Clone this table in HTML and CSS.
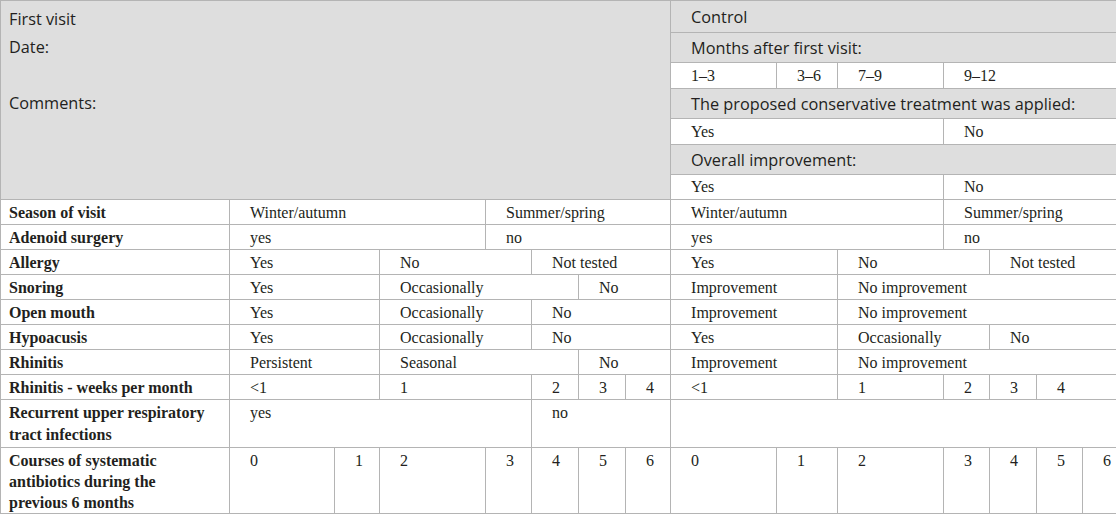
FILE: index.html
```html
<!DOCTYPE html>
<html lang="en">
<head>
<meta charset="utf-8">
<title>Adenoid follow-up form</title>
<link rel="stylesheet" href="styles.css">
</head>
<body>
<table class="form">
  <colgroup>
    <col class="c1"><col class="c2"><col class="c3"><col class="c4"><col class="c5"><col class="c6"><col class="c7"><col class="c8">
    <col class="c9"><col class="c10"><col class="c11"><col class="c12"><col class="c13"><col class="c14"><col class="c15">
  </colgroup>
  <tbody>
    <tr class="h-control">
      <td class="visit" rowspan="7" colspan="8">
        <p class="vline">First visit</p>
        <p class="vline">Date:</p>
        <p class="vline">&nbsp;</p>
        <p class="vline">Comments:</p>
      </td>
      <td class="head" colspan="7">Control</td>
    </tr>
    <tr class="h-gray">
      <td class="head" colspan="7">Months after first visit:</td>
    </tr>
    <tr class="h-white">
      <td class="v">1–3</td>
      <td class="v">3–6</td>
      <td class="v">7–9</td>
      <td class="v" colspan="4">9–12</td>
    </tr>
    <tr class="h-gray">
      <td class="head" colspan="7">The proposed conservative treatment was applied:</td>
    </tr>
    <tr class="h-white">
      <td class="v" colspan="3">Yes</td>
      <td class="v" colspan="4">No</td>
    </tr>
    <tr class="h-gray">
      <td class="head" colspan="7">Overall improvement:</td>
    </tr>
    <tr class="h-last">
      <td class="v" colspan="3">Yes</td>
      <td class="v" colspan="4">No</td>
    </tr>

    <tr class="r">
      <th class="lab">Season of visit</th>
      <td class="v" colspan="3">Winter/autumn</td>
      <td class="v" colspan="4">Summer/spring</td>
      <td class="v" colspan="3">Winter/autumn</td>
      <td class="v" colspan="4">Summer/spring</td>
    </tr>
    <tr class="r">
      <th class="lab">Adenoid surgery</th>
      <td class="v" colspan="3">yes</td>
      <td class="v" colspan="4">no</td>
      <td class="v" colspan="3">yes</td>
      <td class="v" colspan="4">no</td>
    </tr>
    <tr class="r">
      <th class="lab">Allergy</th>
      <td class="v" colspan="2">Yes</td>
      <td class="v" colspan="2">No</td>
      <td class="v" colspan="3">Not tested</td>
      <td class="v" colspan="2">Yes</td>
      <td class="v" colspan="2">No</td>
      <td class="v" colspan="3">Not tested</td>
    </tr>
    <tr class="r">
      <th class="lab">Snoring</th>
      <td class="v" colspan="2">Yes</td>
      <td class="v" colspan="3">Occasionally</td>
      <td class="v" colspan="2">No</td>
      <td class="v" colspan="2">Improvement</td>
      <td class="v" colspan="5">No improvement</td>
    </tr>
    <tr class="r">
      <th class="lab">Open mouth</th>
      <td class="v" colspan="2">Yes</td>
      <td class="v" colspan="2">Occasionally</td>
      <td class="v" colspan="3">No</td>
      <td class="v" colspan="2">Improvement</td>
      <td class="v" colspan="5">No improvement</td>
    </tr>
    <tr class="r">
      <th class="lab">Hypoacusis</th>
      <td class="v" colspan="2">Yes</td>
      <td class="v" colspan="2">Occasionally</td>
      <td class="v" colspan="3">No</td>
      <td class="v" colspan="2">Yes</td>
      <td class="v" colspan="2">Occasionally</td>
      <td class="v" colspan="3">No</td>
    </tr>
    <tr class="r">
      <th class="lab">Rhinitis</th>
      <td class="v" colspan="2">Persistent</td>
      <td class="v" colspan="3">Seasonal</td>
      <td class="v" colspan="2">No</td>
      <td class="v" colspan="2">Improvement</td>
      <td class="v" colspan="5">No improvement</td>
    </tr>
    <tr class="r">
      <th class="lab">Rhinitis - weeks per month</th>
      <td class="v" colspan="2">&lt;1</td>
      <td class="v" colspan="2">1</td>
      <td class="v">2</td>
      <td class="v">3</td>
      <td class="v">4</td>
      <td class="v" colspan="2">&lt;1</td>
      <td class="v">1</td>
      <td class="v">2</td>
      <td class="v">3</td>
      <td class="v" colspan="2">4</td>
    </tr>
    <tr class="r2">
      <th class="lab">Recurrent upper respiratory tract infections</th>
      <td class="v" colspan="4">yes</td>
      <td class="v" colspan="3">no</td>
      <td class="v" colspan="7"></td>
    </tr>
    <tr class="r3">
      <th class="lab">Courses of systematic antibiotics during the previous 6 months</th>
      <td class="v">0</td>
      <td class="v">1</td>
      <td class="v">2</td>
      <td class="v">3</td>
      <td class="v">4</td>
      <td class="v">5</td>
      <td class="v">6</td>
      <td class="v">0</td>
      <td class="v">1</td>
      <td class="v">2</td>
      <td class="v">3</td>
      <td class="v">4</td>
      <td class="v">5</td>
      <td class="v">6</td>
    </tr>
  </tbody>
</table>
</body>
</html>
```

FILE: styles.css
```css
html, body {
  margin: 0;
  padding: 0;
  background: #ffffff;
}

.form {
  width: 1116px;
  table-layout: fixed;
  border-collapse: collapse;
  border: 1px solid #a3a3a3;
  color: #231f20;
  font-family: "Liberation Serif", "DejaVu Serif", serif;
  font-size: 16px;
}

.c1 { width: 229px; }
.c2 { width: 105px; }
.c3 { width: 45px; }
.c4 { width: 106px; }
.c5 { width: 46px; }
.c6 { width: 47px; }
.c7 { width: 47px; }
.c8 { width: 45px; }
.c9 { width: 106px; }
.c10 { width: 61px; }
.c11 { width: 106px; }
.c12 { width: 46px; }
.c13 { width: 47px; }
.c14 { width: 46px; }
.c15 { width: 34px; }

.form td,
.form th {
  border: 1px solid #b4b4b4;
  padding: 0;
  text-align: left;
  vertical-align: top;
  line-height: 22px;
  white-space: nowrap;
}

.visit {
  background: #dedede;
  font-family: "Open Sans", "Noto Sans", sans-serif;
  font-size: 16.3px;
  padding: 4px 0 0 8px !important;
}

.vline {
  margin: 0;
  line-height: 28px;
}

.head {
  background: #dedede;
  font-family: "Open Sans", "Noto Sans", sans-serif;
  font-size: 16.3px;
  padding-left: 20px !important;
  vertical-align: middle !important;
}

.v {
  padding: 2px 0 0 20px !important;
}

.lab {
  font-weight: bold;
  padding: 2px 16px 0 8px !important;
  white-space: normal !important;
}

.h-control { height: 32px; }
.h-gray { height: 30px; }
.h-white { height: 26px; }
.h-white .v, .h-last .v { vertical-align: middle; padding-top: 0 !important; }
.h-last { height: 25px; }

.r { height: 25px; }
.r2 { height: 48px; }
.r3 { height: 66px; }
.r3 .lab { line-height: 21px; }
```
